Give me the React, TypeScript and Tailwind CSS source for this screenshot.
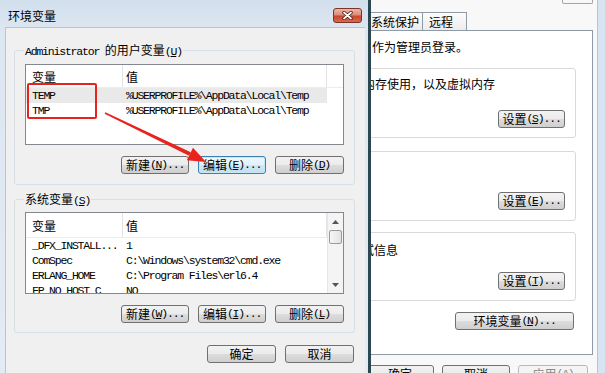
import React from 'react';

const CJK = "font-['Noto_Sans_CJK_SC','Noto_Sans_CJK_JP',sans-serif]";
const MONO = "font-['Liberation_Mono','Noto_Sans_CJK_SC',monospace]";

function Lat({ children }: { children: React.ReactNode }) {
  return <span className={`${MONO} text-[11.5px] tracking-[-1.2px]`}>{children}</span>;
}

function Acc({ k, dots }: { k: string; dots?: boolean }) {
  return (
    <Lat>
      (<span className="underline underline-offset-[1px]">{k}</span>){dots ? '...' : ''}
    </Lat>
  );
}

type BtnKind = 'normal' | 'focus' | 'disabled';

function Btn({ className, kind = 'normal', children }: { className: string; kind?: BtnKind; children: React.ReactNode }) {
  const skin =
    kind === 'focus'
      ? 'border-[#3c7fb1] bg-[linear-gradient(to_bottom,#eef7fc_0%,#e2f1fa_50%,#d0e8f5_50%,#c2def0_100%)] shadow-[inset_0_0_0_1px_#c4e8f8]'
      : kind === 'disabled'
        ? 'border-[#b5b9bc] bg-[#f4f4f4] text-[#8a8a8a]'
        : 'border-[#707070] bg-[linear-gradient(to_bottom,#f2f2f2_0%,#ebebeb_50%,#dddddd_50%,#cfcfcf_100%)]';
  return (
    <div className={`flex h-[18px] shrink-0 items-center justify-center whitespace-nowrap rounded-[3px] border text-[12px] leading-[14px] ${skin} ${className}`}>
      {children}
    </div>
  );
}

type Row = [string, string];

function ScrollBar() {
  return (
    <div className="flex w-[16px] shrink-0 flex-col border-l border-[#e6e6e6] bg-[#f4f4f4]">
      <div className="flex h-[17px] shrink-0 items-center justify-center">
        <svg width="7" height="4" viewBox="0 0 7 4">
          <path d="M0 4 L3.5 0 L7 4Z" fill="#555" />
        </svg>
      </div>
      <div className="mx-[1px] h-[14px] shrink-0 rounded-[2px] border border-[#9a9a9a] bg-[linear-gradient(to_right,#f6f6f6,#e2e2e2)]" />
      <div className="flex-1" />
      <div className="flex h-[17px] shrink-0 items-center justify-center">
        <svg width="7" height="4" viewBox="0 0 7 4">
          <path d="M0 0 L3.5 4 L7 0Z" fill="#555" />
        </svg>
      </div>
    </div>
  );
}

function ListView({ rows, headCls, hCls, scroll, selected }: { rows: Row[]; headCls: string; hCls: string; scroll?: boolean; selected?: number }) {
  const cell = `${MONO} overflow-hidden whitespace-nowrap text-[11.5px] tracking-[-1.2px] leading-[15px]`;
  return (
    <div className={`flex overflow-hidden border border-[#828790] bg-white ${hCls}`}>
      <div className="flex w-[301px] shrink-0 flex-col">
        <div className={`flex shrink-0 border-b border-[#ececec] ${headCls}`}>
          <div className="flex w-[97px] shrink-0 items-center border-r border-[#e3e3e3] pl-[6px] leading-[13px]">变量</div>
          <div className="flex w-[204px] shrink-0 items-center border-r border-[#e3e3e3] pl-[3px] leading-[13px]">值</div>
        </div>
        {rows.map(([k, v], i) => (
          <div key={k} className={`flex h-[15px] shrink-0 ${i === selected ? 'bg-[#e9e9e9]' : ''}`}>
            <div className={`w-[97px] shrink-0 pl-[6px] ${cell}`}>{k}</div>
            <div className={`w-[204px] shrink-0 pl-[3px] ${cell}`}>{v}</div>
          </div>
        ))}
      </div>
      {scroll ? (
        <ScrollBar />
      ) : (
        <div className="flex flex-1 flex-col">
          <div className={`shrink-0 border-b border-[#ececec] ${headCls}`} />
        </div>
      )}
    </div>
  );
}

function FrontDialog() {
  const userRows: Row[] = [
    ['TEMP', '%USERPROFILE%\\AppData\\Local\\Temp'],
    ['TMP', '%USERPROFILE%\\AppData\\Local\\Temp'],
  ];
  const sysRows: Row[] = [
    ['_DFX_INSTALL...', '1'],
    ['ComSpec', 'C:\\Windows\\system32\\cmd.exe'],
    ['ERLANG_HOME', 'C:\\Program Files\\erl6.4'],
    ['FP_NO_HOST_C', 'NO'],
  ];

  return (
    <div className="flex h-[373px] w-[368px] shrink-0 flex-col bg-[linear-gradient(to_bottom,#d2dfec,#dde7f1_30px,#e3ebf4)]">
      {/* title bar */}
      <div className="flex h-[27px] shrink-0 items-start justify-between">
        <span className="ml-[8px] mt-[9px] text-[12px] leading-[13px]">环境变量</span>
        <div className="mr-[6px] mt-[8px] flex h-[15px] w-[29px] items-center justify-center rounded-[3px] border border-[#7a3528] bg-[linear-gradient(to_bottom,#ecb6a8_0%,#de8b7a_45%,#c8472f_55%,#d66a4f_100%)]">
          <svg width="11" height="9" viewBox="0 0 11 9">
            <path d="M2 1.5 L9 7.5 M9 1.5 L2 7.5" stroke="#4a1a12" strokeWidth="3.4" strokeLinecap="round" />
            <path d="M2 1.5 L9 7.5 M9 1.5 L2 7.5" stroke="#fff" strokeWidth="1.8" strokeLinecap="round" />
          </svg>
        </div>
      </div>

      {/* client */}
      <div className="ml-[5px] mr-[3px] flex flex-1 flex-col border-l border-t border-[#b7c6d6] bg-[#f0f0f0] pl-[8px] pr-[10px]">
        <fieldset className="mt-[16px] w-[341px] rounded-[3px] border border-[#d5dfe5] px-[10px] pb-[10px] pt-[8px]">
          <legend className="-ml-px h-[12px] px-[1px] text-[12px] leading-[12px]">
            <Lat>Administrator </Lat>的用户变量<Acc k="U" />
          </legend>
          <ListView rows={userRows} headCls="h-[23px]" hCls="h-[81px]" selected={0} />
          <div className="mt-[11px] flex justify-end gap-[9px]">
            <Btn className="w-[68px]">新建<Acc k="N" dots /></Btn>
            <Btn className="w-[68px]" kind="focus">编辑<Acc k="E" dots /></Btn>
            <Btn className="w-[69px]">删除<Acc k="D" /></Btn>
          </div>
        </fieldset>

        <fieldset className="mt-[8px] w-[341px] rounded-[3px] border border-[#d5dfe5] px-[10px] pb-[9px] pt-[7px]">
          <legend className="-ml-px h-[12px] px-[1px] text-[12px] leading-[12px]">
            系统变量<Acc k="S" />
          </legend>
          <ListView rows={sysRows} headCls="h-[25px]" hCls="h-[82px]" scroll />
          <div className="mt-[11px] flex justify-end gap-[9px]">
            <Btn className="w-[68px]">新建<Acc k="W" dots /></Btn>
            <Btn className="w-[68px]">编辑<Acc k="I" dots /></Btn>
            <Btn className="w-[69px]">删除<Acc k="L" /></Btn>
          </div>
        </fieldset>

        <div className="mt-[12px] flex justify-end gap-[9px] pr-[1px]">
          <Btn className="w-[69px]">确定</Btn>
          <Btn className="w-[69px]">取消</Btn>
        </div>
      </div>
    </div>
  );
}

function BackWindow() {
  return (
    <div className="flex h-[373px] min-w-0 flex-1 overflow-hidden border-l-[3px] border-[#2b4751]">
      <div className="flex min-w-0 flex-1 flex-col overflow-hidden bg-[#f8f8f8]">
        <div className="flex h-[12px] shrink-0 justify-end">
          <div className="mr-[4px] h-[4px] w-[31px] rounded-b-[2px] border-x border-b border-[#a5a5a5]" />
        </div>

        {/* tabs */}
        <div className="flex h-[18px] shrink-0">
          <div className="-ml-[6px] flex h-[18px] w-[58px] shrink-0 items-center border-x border-t border-[#8e9aa5] bg-[linear-gradient(to_bottom,#fcfcfc,#ececec)] pl-[5px] leading-[13px]">
            系统保护
          </div>
          <div className="-ml-px flex h-[18px] w-[45px] shrink-0 items-center border-x border-t border-[#8e9aa5] bg-[linear-gradient(to_bottom,#fcfcfc,#ececec)] pl-[6px] leading-[13px]">
            远程
          </div>
        </div>

        {/* panel */}
        <div className="-ml-[20px] mr-[4px] flex h-[325px] shrink-0 flex-col border border-[#8e9aa5] bg-white">
          <div className="ml-[20px] mt-[9px] whitespace-nowrap leading-[13px]">作为管理员登录。</div>

          <div className="mr-[16px] mt-[15px] flex h-[70px] shrink-0 flex-col rounded-[3px] border border-[#d9d9d9]">
            <div className="ml-[10px] mt-[8px] whitespace-nowrap leading-[13px]">内存使用，以及虚拟内存</div>
            <Btn className="mb-[9px] mr-[10px] mt-auto w-[67px] self-end">设置<Acc k="S" dots /></Btn>
          </div>

          <div className="mr-[16px] mt-[13px] flex h-[70px] shrink-0 flex-col rounded-[3px] border border-[#d9d9d9]">
            <Btn className="mb-[10px] mr-[10px] mt-auto w-[67px] self-end">设置<Acc k="E" dots /></Btn>
          </div>

          <div className="mr-[16px] mt-[11px] flex h-[69px] shrink-0 flex-col rounded-[3px] border border-[#d9d9d9]">
            <div className="-ml-[3px] mt-[10px] whitespace-nowrap leading-[13px]">调试信息</div>
            <Btn className="mb-[10px] mr-[10px] mt-auto w-[67px] self-end">设置<Acc k="T" dots /></Btn>
          </div>

          <Btn className="mr-[18px] mt-[11px] w-[119px] self-end">环境变量<Acc k="N" dots /></Btn>
        </div>

        <div className="mr-[9px] mt-[10px] flex shrink-0 justify-end gap-[8px]">
          <Btn className="w-[68px]">确定</Btn>
          <Btn className="w-[68px]">取消</Btn>
          <Btn className="w-[70px]" kind="disabled">
            应用<Lat>(A)</Lat>
          </Btn>
        </div>
      </div>
      <div className="w-[8px] shrink-0 border-l border-[#b4c6d9] bg-[#d7e4f2]" />
    </div>
  );
}

export default function App() {
  return (
    <div className={`relative flex h-[373px] w-[605px] overflow-hidden bg-white text-[12px] text-black ${CJK}`}>
      <FrontDialog />
      <BackWindow />

      {/* red annotation over the screenshot */}
      <svg className="pointer-events-none absolute left-0 top-0" width="605" height="373" viewBox="0 0 605 373">
        <rect x="28" y="84" width="68" height="34" rx="1" fill="none" stroke="#e8231e" strokeWidth="2" />
        <polygon points="104.6,113.7 105.4,112.3 190.8,152.2 189,155.8" fill="#e8231e" />
        <polygon points="206,162 186.8,160.3 193,147.7" fill="#e8231e" />
      </svg>
    </div>
  );
}
